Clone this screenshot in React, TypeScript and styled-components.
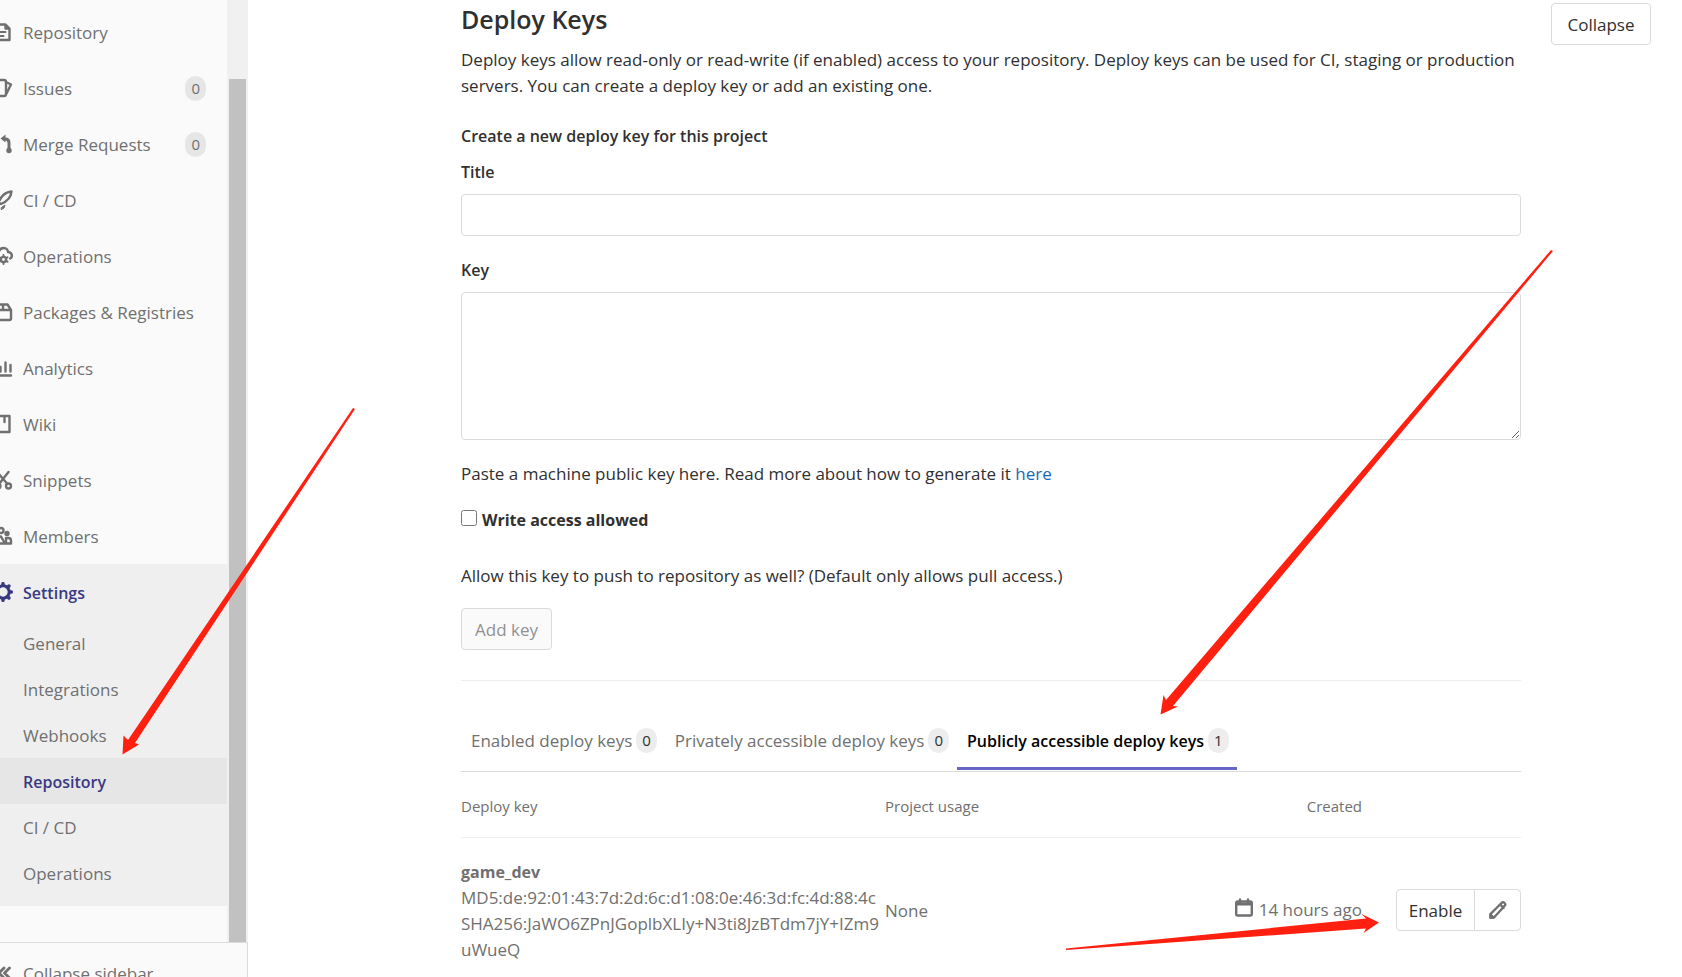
import React from "react";
import styled, { createGlobalStyle } from "styled-components";

const GlobalStyle = createGlobalStyle`
  *, *::before, *::after { box-sizing: border-box; }
  body {
    margin: 0;
    background: #fff;
    color: #303030;
    font-family: "Open Sans", "Noto Sans", sans-serif;
    font-size: 17px;
    line-height: 26px;
  }
  button, input, textarea { font: inherit; color: inherit; }
  h4, h5, p, ul { margin: 0; padding: 0; }
  strong { font-size: 16px; }
  a { color: #1b69b6; text-decoration: none; }
`;

const Page = styled.div`
  position: relative;
  display: flex;
  height: 100vh;
  overflow: hidden;
`;

/* ---------- Sidebar ---------- */

const Sidebar = styled.aside`
  flex: none;
  width: 248px;
  display: flex;
  flex-direction: column;
  background: #fafafa;
`;

const SidebarScroller = styled.div`
  flex: none;
  display: flex;
`;

const Nav = styled.nav`
  flex: 1;
  padding: 4px 0 36px;
`;

const NavList = styled.ul`
  list-style: none;
`;

const NavItem = styled.li<{ $active?: boolean }>`
  background: ${(p) => (p.$active ? "#efefef" : "transparent")};
  padding-bottom: ${(p) => (p.$active ? "10px" : "0")};
`;

const NavLink = styled.a<{ $active?: boolean }>`
  display: flex;
  align-items: center;
  height: 56px;
  padding-right: 21px;
  color: ${(p) => (p.$active ? "#393982" : "#707070")};
  font-size: ${(p) => (p.$active ? "16px" : "17px")};
  font-weight: ${(p) => (p.$active ? 600 : 400)};
`;

const IconSlot = styled.span`
  flex: none;
  display: flex;
  justify-content: flex-end;
  width: 13px;
  margin-right: 10px;
  overflow: hidden;
`;

const NavLabel = styled.span`
  flex: 1;
  padding-top: 2px;
  white-space: nowrap;
`;

const SubLink = styled.a<{ $active?: boolean }>`
  display: flex;
  align-items: center;
  height: 46px;
  padding: 2px 0 0 23px;
  color: ${(p) => (p.$active ? "#393982" : "#707070")};
  font-size: ${(p) => (p.$active ? "16px" : "17px")};
  font-weight: ${(p) => (p.$active ? 600 : 400)};
  background: ${(p) => (p.$active ? "#e6e6e6" : "transparent")};
`;

const Badge = styled.span<{ $dark?: boolean }>`
  display: inline-block;
  padding: 0 6px;
  border-radius: 12px;
  font-size: 15px;
  font-weight: 400;
  line-height: 25px;
  color: ${(p) => (p.$dark ? "#707070" : "#303030")};
  background: ${(p) => (p.$dark ? "#e6e6e6" : "#ededed")};
`;

const ScrollTrack = styled.div`
  flex: none;
  display: flex;
  width: 21px;
  padding: 79px 2px 0;
  background: #f0f0f0;
`;

const ScrollThumb = styled.div`
  flex: 1;
  background: #c1c1c1;
`;

const CollapseSidebar = styled.button`
  flex: none;
  display: flex;
  align-items: center;
  height: 60px;
  padding: 0;
  border: solid #dbdbdb;
  border-width: 1px 1px 0 0;
  background: #fafafa;
  color: #707070;
  text-align: left;
`;

const Svg = styled.svg`
  flex: none;
  display: block;
  fill: none;
  stroke: currentColor;
  stroke-width: 2.4;
  stroke-linejoin: round;
  stroke-linecap: round;
`;

const SolidShape = styled.g`
  fill: currentColor;
  stroke: none;
`;

const Icon = ({ children }: { children: React.ReactNode }) => (
  <Svg width="20" height="20" viewBox="0 0 20 20" aria-hidden="true">
    {children}
  </Svg>
);

const icons = {
  doc: (
    <Icon>
      <path d="M4 2.500h8.500l4 4V18H4z M12.500 3v3.500H16" />
      <path d="M7 10h5.500M7 14h3.500" strokeWidth="2" />
    </Icon>
  ),
  issues: (
    <Icon>
      <rect x="2" y="2" width="11" height="16" rx="2" />
      <path d="M13 4l5 2.500-4.500 9" />
    </Icon>
  ),
  merge: (
    <Icon>
      <path d="M11 5h1.500Q16 5 16 9v7" strokeWidth="3" />
      <SolidShape>
        <path d="M7.500 4.500l5-4v8z" />
        <circle cx="16" cy="16.500" r="2.700" />
      </SolidShape>
    </Icon>
  ),
  rocket: (
    <Icon>
      <path d="M5.500 12.500C8 6 12 2 18.500 1.500 18 8 14 11.500 8 14z" />
      <path d="M8.500 17.500l3.500-2.500-1 3-2.500 1.500z" fill="currentColor" strokeWidth="1" />
    </Icon>
  ),
  cloud: (
    <Icon>
      <path d="M2.500 12.500C0 9 3 6 5.500 6.500 7 0 15 1 15 6c4 0 5 5 2.200 6.500" />
      <circle cx="10.500" cy="13.500" r="2.600" />
      <path d="M10.500 9v1M10.500 17v1M6.600 11.300l.8.500M13.600 15.200l.8.500M14.400 11.300l-.8.500M7.400 15.200l-.8.500" strokeWidth="2" />
    </Icon>
  ),
  package: (
    <Icon>
      <path d="M2 8h16v8.500q0 1.500-1.500 1.500h-13Q2 18 2 16.500zM2 8l3-5.500h9.500L18 8M10 3v4" />
    </Icon>
  ),
  analytics: (
    <Icon>
      <path d="M1 17.500h17M7.500 9v4.500M12.500 4.500v9M17.500 7v6.500" />
    </Icon>
  ),
  wiki: (
    <Icon>
      <path d="M3 2h13.500v16H3zM11.500 3v5" />
    </Icon>
  ),
  snippets: (
    <Icon>
      <path d="M4 2l10.500 12M15.500 2L6 14" />
      <circle cx="15.500" cy="16" r="2.500" />
      <circle cx="5" cy="16" r="2.500" />
    </Icon>
  ),
  members: (
    <Icon>
      <circle cx="8" cy="4.500" r="2.500" />
      <path d="M2.500 17.500V14q0-3 3-3.500H8l4 7z" />
      <path d="M13 17.500h5V15q0-3-2.500-3h-2.500z" />
      <circle cx="14" cy="7.500" r="2.700" fill="currentColor" stroke="none" />
    </Icon>
  ),
  gear: (
    <Icon>
      <circle cx="10" cy="10" r="6.200" strokeWidth="3" />
      <path
        d="M10 1.700v1.500M10 16.800v1.500M1.700 10h1.500M16.800 10h1.500M4.100 4.100l1 1M14.900 14.900l1 1M4.100 15.900l1-1M14.900 5.100l1-1"
        strokeWidth="3.500"
      />
    </Icon>
  ),
  chevrons: (
    <Icon>
      <path d="M11 5l-5 5 5 5M16.500 5l-5 5 5 5" strokeWidth="2.800" />
    </Icon>
  ),
};

const navItems: { label: string; icon: React.ReactNode; count?: number }[] = [
  { label: "Repository", icon: icons.doc },
  { label: "Issues", icon: icons.issues, count: 0 },
  { label: "Merge Requests", icon: icons.merge, count: 0 },
  { label: "CI / CD", icon: icons.rocket },
  { label: "Operations", icon: icons.cloud },
  { label: "Packages & Registries", icon: icons.package },
  { label: "Analytics", icon: icons.analytics },
  { label: "Wiki", icon: icons.wiki },
  { label: "Snippets", icon: icons.snippets },
  { label: "Members", icon: icons.members },
];

const settingsItems = ["General", "Integrations", "Webhooks", "Repository", "CI / CD", "Operations"];

/* ---------- Main ---------- */

const Main = styled.main`
  flex: 1;
  min-width: 0;
  display: flex;
  align-items: flex-start;
  gap: 30px;
  padding: 3px 31px 0 213px;
`;

const Content = styled.section`
  flex: 1;
  min-width: 0;
`;

const Heading = styled.h4`
  font-size: 25px;
  font-weight: 600;
  line-height: 32px;
  && { margin-bottom: 12px; }
`;

const Subheading = styled.h5`
  font-size: 16px;
  font-weight: 600;
  && { margin: 24px 0 10px; }
`;

const FieldLabel = styled.label`
  display: block;
  font-size: 16px;
  font-weight: 600;
  margin-bottom: 9px;
`;

const TextInput = styled.input`
  display: block;
  width: 100%;
  height: 42px;
  margin-bottom: 21px;
  padding: 0 12px;
  border: 1px solid #dbdbdb;
  border-radius: 4px;
  background: #fff;
`;

const TextArea = styled.textarea`
  display: block;
  width: 100%;
  height: 148px;
  margin-bottom: 21px;
  padding: 8px 12px;
  border: 1px solid #dbdbdb;
  border-radius: 4px;
  background: #fff;
`;

const CheckLabel = styled.label`
  display: flex;
  align-items: center;
  gap: 5px;
  margin: 20px 0 30px;
  font-size: 16px;
  font-weight: 700;
`;

const CheckBox = styled.input`
  width: 16px;
  height: 16px;
  margin: 0 0 4px;
`;

const Button = styled.button`
  flex: none;
  height: 42px;
  padding: 2px 0 0;
  border: 1px solid #dbdbdb;
  border-radius: 4px;
  background: #fff;
  color: #303030;
  white-space: nowrap;
  &:disabled {
    background: #fafafa;
    color: #919191;
  }
`;

const CollapseButton = styled(Button)`
  width: 100px;
`;

const AddButton = styled(Button)`
  display: block;
  width: 91px;
  margin-top: 19px;
`;

const Divider = styled.hr`
  margin: 30px 0 0;
  border: 0;
  border-top: 1px solid #eee;
`;

const Tabs = styled.div`
  display: flex;
  margin-top: 30px;
  height: 61px;
  border-bottom: 1px solid #dbdbdb;
`;

const Tab = styled.button<{ $active?: boolean }>`
  display: flex;
  align-items: center;
  gap: 4px;
  height: 59px;
  padding: 3px 8px 0 10px;
  border: 0;
  border-bottom: 3px solid ${(p) => (p.$active ? "#6666c4" : "transparent")};
  background: none;
  white-space: nowrap;
  color: ${(p) => (p.$active ? "#000" : "#707070")};
  font-size: ${(p) => (p.$active ? "16px" : "17px")};
  font-weight: ${(p) => (p.$active ? 600 : 400)};
`;

const KeyTable = styled.table`
  width: 100%;
  table-layout: fixed;
  border-collapse: collapse;
  color: #707070;
`;

const HeadCell = styled.th<{ $width: number; $right?: boolean }>`
  width: ${(p) => p.$width}%;
  height: 65px;
  padding: 4px 0 0;
  border-bottom: 1px solid #eee;
  font-size: 15px;
  font-weight: 400;
  text-align: ${(p) => (p.$right ? "right" : "left")};
`;

const Cell = styled.td<{ $right?: boolean }>`
  padding: ${(p) => (p.$right ? "19px" : "21px")} 0 0;
  vertical-align: middle;
  text-align: ${(p) => (p.$right ? "right" : "left")};
  overflow-wrap: anywhere;
`;

const Created = styled.span`
  display: flex;
  align-items: center;
  justify-content: flex-end;
  gap: 6px;
  white-space: nowrap;
`;

const CalendarIcon = styled(Svg)`
  margin-bottom: 4px;
`;

const ButtonGroup = styled.div`
  display: flex;
  justify-content: flex-end;
`;

const EnableButton = styled(Button)`
  width: 79px;
  border-radius: 4px 0 0 4px;
`;

const EditButton = styled(Button)`
  display: grid;
  place-items: center;
  width: 47px;
  margin-left: -1px;
  padding: 0;
  border-radius: 0 4px 4px 0;
  color: #707070;
`;

const Annotations = styled.svg`
  position: absolute;
  top: 0;
  left: 0;
  pointer-events: none;
  fill: #ff2010;
`;

export default function App() {
  return (
    <Page>
      <GlobalStyle />
      <Sidebar>
        <SidebarScroller>
          <Nav>
            <NavList>
              {navItems.map((item) => (
                <NavItem key={item.label}>
                  <NavLink href="#">
                    <IconSlot>{item.icon}</IconSlot>
                    <NavLabel>{item.label}</NavLabel>
                    {item.count !== undefined && <Badge $dark>{item.count}</Badge>}
                  </NavLink>
                </NavItem>
              ))}
              <NavItem $active>
                <NavLink href="#" $active>
                  <IconSlot>{icons.gear}</IconSlot>
                  <NavLabel>Settings</NavLabel>
                </NavLink>
                <NavList>
                  {settingsItems.map((label) => (
                    <li key={label}>
                      <SubLink href="#" $active={label === "Repository"}>
                        {label}
                      </SubLink>
                    </li>
                  ))}
                </NavList>
              </NavItem>
            </NavList>
          </Nav>
          <ScrollTrack>
            <ScrollThumb />
          </ScrollTrack>
        </SidebarScroller>
        <CollapseSidebar type="button">
          <IconSlot>{icons.chevrons}</IconSlot>
          <NavLabel>Collapse sidebar</NavLabel>
        </CollapseSidebar>
      </Sidebar>

      <Main>
        <Content>
          <Heading>Deploy Keys</Heading>
          <p>
            Deploy keys allow read-only or read-write (if enabled) access to your repository. Deploy keys can be used
            for CI, staging or production servers. You can create a deploy key or add an existing one.
          </p>
          <Subheading>Create a new deploy key for this project</Subheading>
          <FieldLabel htmlFor="key-title">Title</FieldLabel>
          <TextInput id="key-title" type="text" />
          <FieldLabel htmlFor="key-body">Key</FieldLabel>
          <TextArea id="key-body" />
          <p>
            Paste a machine public key here. Read more about how to generate it <a href="#">here</a>
          </p>
          <CheckLabel>
            <CheckBox type="checkbox" />
            Write access allowed
          </CheckLabel>
          <p>Allow this key to push to repository as well? (Default only allows pull access.)</p>
          <AddButton type="button" disabled>
            Add key
          </AddButton>
          <Divider />

          <Tabs role="tablist">
            <Tab type="button" role="tab" aria-selected="false">
              Enabled deploy keys <Badge>0</Badge>
            </Tab>
            <Tab type="button" role="tab" aria-selected="false">
              Privately accessible deploy keys <Badge>0</Badge>
            </Tab>
            <Tab type="button" role="tab" aria-selected="true" $active>
              Publicly accessible deploy keys <Badge>1</Badge>
            </Tab>
          </Tabs>

          <KeyTable>
            <thead>
              <tr>
                <HeadCell $width={40}>Deploy key</HeadCell>
                <HeadCell $width={30}>Project usage</HeadCell>
                <HeadCell $width={15} $right>
                  Created
                </HeadCell>
                <HeadCell $width={15} />
              </tr>
            </thead>
            <tbody>
              <tr>
                <Cell>
                  <strong>game_dev</strong>
                  <br />
                  MD5:de:92:01:43:7d:2d:6c:d1:08:0e:46:3d:fc:4d:88:4c
                  <br />
                  SHA256:JaWO6ZPnJGoplbXLIy+N3ti8JzBTdm7jY+IZm9uWueQ
                </Cell>
                <Cell>None</Cell>
                <Cell $right>
                  <Created>
                    <CalendarIcon width="18" height="20" viewBox="0 0 18 20" aria-hidden="true">
                      <rect x="1.200" y="3.500" width="15.600" height="14" rx="1.500" />
                      <path d="M1.500 6h15" strokeWidth="3" />
                      <path d="M5 1.500v3M13 1.500v3" />
                    </CalendarIcon>
                    14 hours ago
                  </Created>
                </Cell>
                <Cell $right>
                  <ButtonGroup>
                    <EnableButton type="button">Enable</EnableButton>
                    <EditButton type="button" aria-label="Edit">
                      <Svg width="20" height="20" viewBox="0 0 20 20" aria-hidden="true">
                        <path d="M2.500 17.500v-3.500L13.500 3q1.500-1.500 3 0t0 3L6 17.500zM12.200 4.500l3.300 3.300" />
                        <path d="M2.500 17.500v-3l3 3z" fill="currentColor" />
                      </Svg>
                    </EditButton>
                  </ButtonGroup>
                </Cell>
              </tr>
            </tbody>
          </KeyTable>
        </Content>
        <CollapseButton type="button">Collapse</CollapseButton>
      </Main>

      <Annotations width="1682" height="977" viewBox="0 0 1682 977" aria-hidden="true">
        <path d="M353 408l2 1L135 743l4 1.500-16.500 10 1-19 4.500 4.500z" />
        <path d="M1551 250l2 1L1173 706l5 .5-17.500 8 3-19.500 2.500 5z" />
        <path d="M1066 948.500v1.500l300-21.500-2.500 4.500 15.500-10.500-17.500-8.500 4.500 4.500z" />
      </Annotations>
    </Page>
  );
}
